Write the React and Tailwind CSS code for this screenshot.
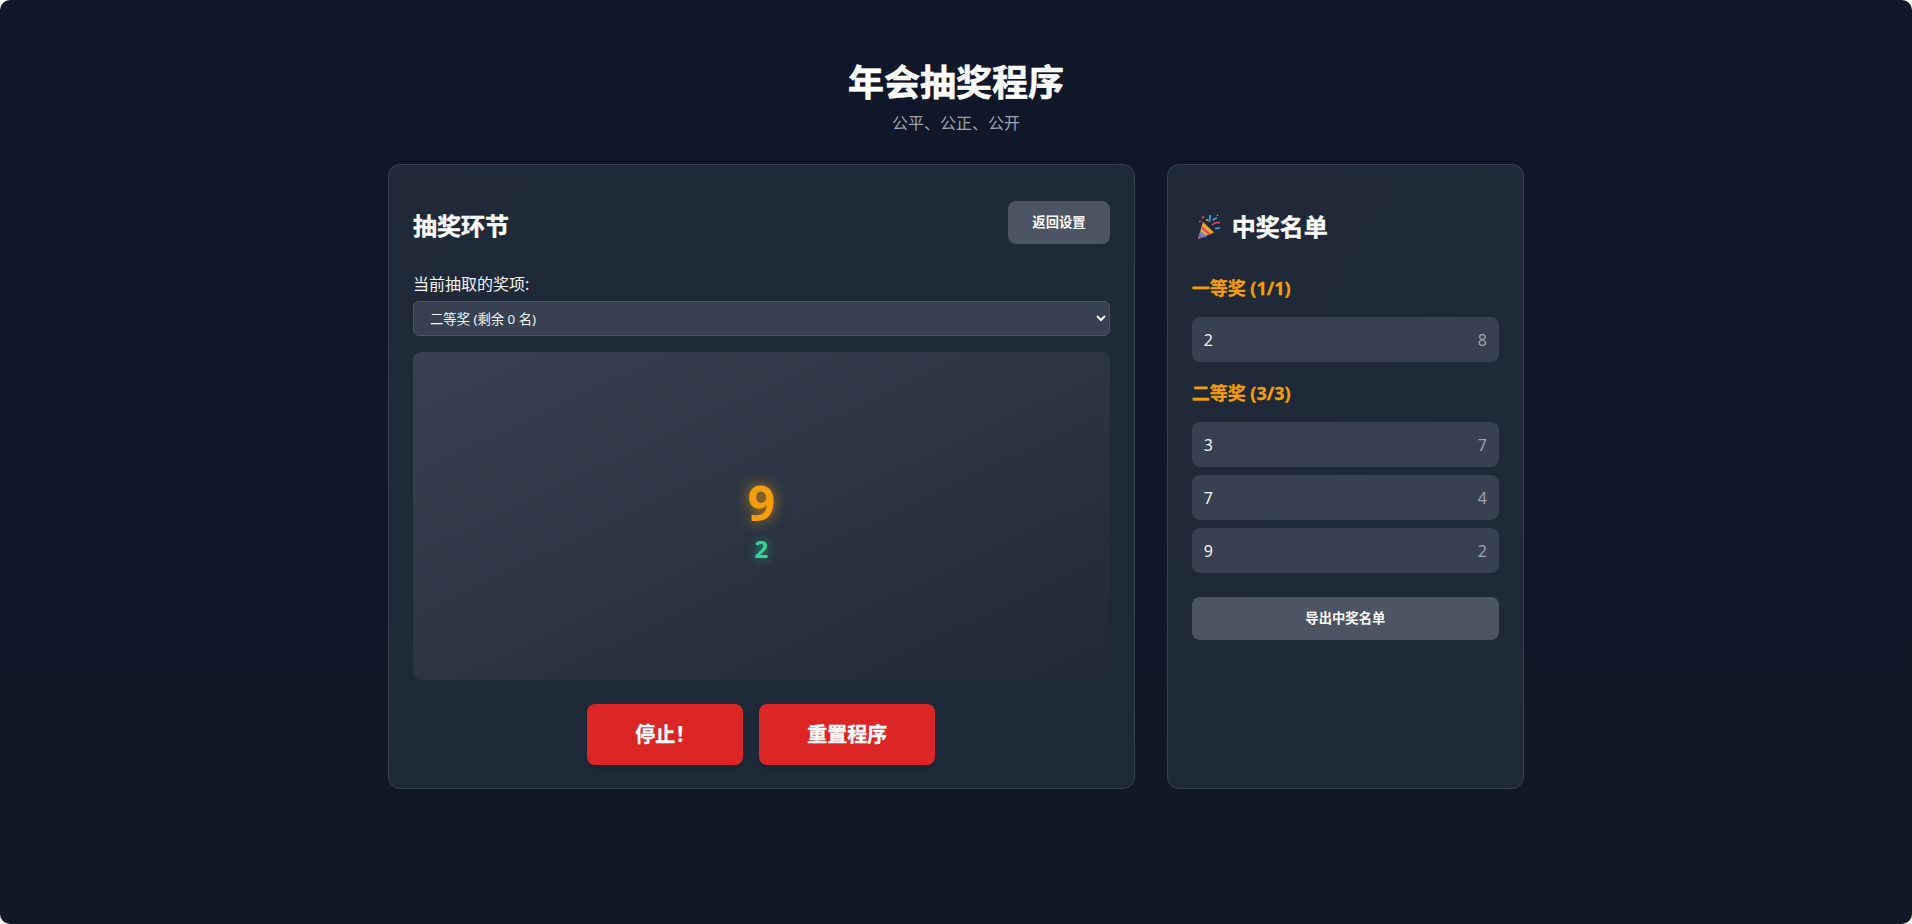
const FONT = "font-['Noto_Sans','Noto_Sans_CJK_SC',sans-serif]";

function Popper() {
  return (
    <svg width="24" height="26" viewBox="0 0 24 26" className="shrink-0">
      <path d="M1 25 L6 8 L17 18.5 Z" fill="#f5a623" />
      <path d="M1 25 L2.6 19.6 L7 23.2 Z" fill="#8e63b5" />
      <path d="M3.4 17 L10.4 22.2 L7.6 23.2 L2.6 19.6 Z" fill="#5b8fd6" />
      <path d="M4.8 12 L14 20 L11.8 20.9 L4.2 14.4 Z" fill="#e0457b" />
      <circle cx="6" cy="3.4" r="1.2" fill="#e0457b" />
      <circle cx="3" cy="7.4" r="1" fill="#e0457b" />
      <circle cx="10" cy="6" r="1" fill="#f5a623" />
      <path d="M13.4 1 L12.2 8" stroke="#4a9be8" strokeWidth="1.8" fill="none" />
      <path d="M15 11 Q18.5 7.4 23 9" stroke="#e0457b" strokeWidth="1.6" fill="none" />
      <path d="M15.6 6 L19.8 3.8" stroke="#4a9be8" strokeWidth="1.6" fill="none" />
      <path d="M18 14.6 L23 14" stroke="#4a9be8" strokeWidth="1.6" fill="none" />
      <circle cx="20.5" cy="1.2" r="0.8" fill="#f5a623" />
    </svg>
  );
}

function Winner({ name, code }) {
  return (
    <div className="flex h-[45px] items-center justify-between rounded-lg bg-[#374151] px-3 text-base">
      <span className="text-[#f3f4f6]">{name}</span>
      <span className="text-[#9ca3af]">{code}</span>
    </div>
  );
}

function Section({ title, children }) {
  return (
    <div>
      <h3 className="mb-[15px] text-lg leading-7 font-bold text-[#f59e0b] [-webkit-text-stroke:0.3px_#f59e0b]">{title}</h3>
      <div className="flex flex-col gap-2">{children}</div>
    </div>
  );
}

export default function App() {
  return (
    <div className="h-[924px] overflow-hidden bg-white">
      <div className={`${FONT} h-full overflow-hidden rounded-[10px] bg-gradient-to-b from-[#0f172a] to-[#111827] pt-[63px] text-white`}>
        <header className="text-center">
          <h1 className="text-4xl leading-10 font-bold [-webkit-text-stroke:0.6px_white]">年会抽奖程序</h1>
          <p className="mt-2 text-base leading-6 text-[#9ca3af]">公平、公正、公开</p>
        </header>

        <main className="mx-auto mt-[29px] grid w-[1136px] grid-cols-3 gap-8">
          <section className="col-span-2 h-[625px] rounded-xl border border-[#374151] bg-gradient-to-br from-[#1f2937] to-[#1e2a38] p-6">
            <div className="mt-3 flex items-start justify-between">
              <h2 className="mt-[9px] text-2xl leading-8 font-bold [-webkit-text-stroke:0.4px_white]">抽奖环节</h2>
              <button className="h-[43px] rounded-lg bg-[#4b5563] px-6 text-[13.33px] font-bold">返回设置</button>
            </div>
            <label className="mt-7 mb-[5px] block text-base leading-6 text-[#f3f4f6]">当前抽取的奖项:</label>
            <select className="block h-[35px] w-full rounded-md border border-[#4b5563] bg-[#374151] px-3 text-[13.33px] text-[#f3f4f6]">
              <option>二等奖 (剩余 0 名)</option>
            </select>
            <div className="mt-4 flex h-[328px] flex-col items-center justify-center rounded-lg bg-gradient-to-br from-[#374151] to-[#1f2937] pt-[6px]">
              <div className="text-5xl leading-[60px] font-bold text-[#f59e0b] [text-shadow:0_0_14px_rgba(245,158,11,0.75)]">9</div>
              <div className="text-2xl leading-8 font-bold text-[#34d399] [text-shadow:0_0_10px_rgba(52,211,153,0.6)]">2</div>
            </div>
            <div className="mt-6 flex justify-center gap-4">
              <button className="h-[61px] rounded-lg bg-[#dc2626] px-12 text-xl font-bold shadow-md [-webkit-text-stroke:0.3px_white]">停止！</button>
              <button className="h-[61px] rounded-lg bg-[#dc2626] px-12 text-xl font-bold shadow-md [-webkit-text-stroke:0.3px_white]">重置程序</button>
            </div>
          </section>

          <aside className="h-[625px] rounded-xl border border-[#374151] bg-gradient-to-br from-[#1f2937] to-[#1e2a38] p-6">
            <h2 className="mt-[22px] flex items-center gap-[11px] text-2xl leading-8 font-bold [-webkit-text-stroke:0.4px_white]">
              <span className="ml-[5px]"><Popper /></span>
              <span>中奖名单</span>
            </h2>
            <div className="mt-[31px] flex flex-col gap-[17px]">
              <Section title="一等奖 (1/1)">
                <Winner name="2" code="8" />
              </Section>
              <Section title="二等奖 (3/3)">
                <Winner name="3" code="7" />
                <Winner name="7" code="4" />
                <Winner name="9" code="2" />
              </Section>
            </div>
            <button className="mt-6 h-[43px] w-full rounded-lg bg-[#4b5563] text-[13.33px] font-bold">导出中奖名单</button>
          </aside>
        </main>
      </div>
    </div>
  );
}
